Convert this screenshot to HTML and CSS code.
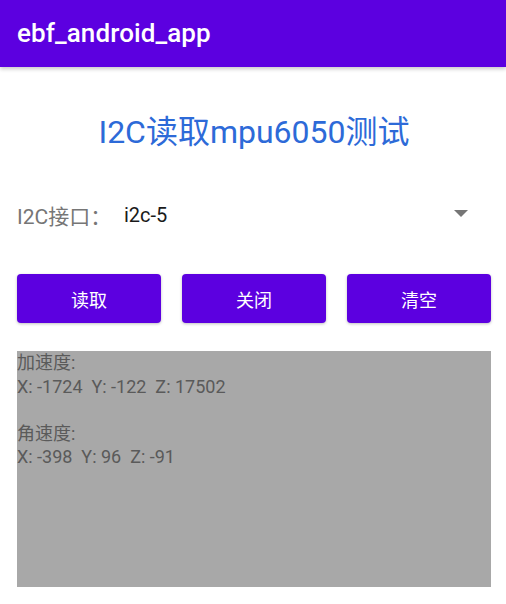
FILE: index.html
```html
<!DOCTYPE html>
<html lang="zh">
<head>
<meta charset="utf-8">
<title>ebf_android_app</title>
<link rel="stylesheet" href="styles.css">
</head>
<body>
<header class="appbar"><span class="appbar-title">ebf_android_app</span></header>
<main class="content">
  <h1 class="heading">I2C读取mpu6050测试</h1>
  <div class="row">
    <span class="label">I2C接口：</span>
    <div class="spinner">
      <span class="spinner-value">i2c-5</span>
      <span class="arrow"></span>
    </div>
  </div>
  <div class="buttons">
    <button class="btn">读取</button>
    <button class="btn">关闭</button>
    <button class="btn">清空</button>
  </div>
  <div class="output">加速度:
X: -1724  Y: -122  Z: 17502

角速度:
X: -398  Y: 96  Z: -91</div>
</main>
</body>
</html>
```
FILE: styles.css
```css
html, body {
  margin: 0;
  padding: 0;
  background: #ffffff;
  font-family: Roboto, "Noto Sans CJK SC", sans-serif;
}
.appbar {
  height: 67px;
  background: #5c00e0;
  display: flex;
  align-items: center;
  padding-left: 17px;
  box-shadow: 0 2px 4px rgba(0, 0, 0, 0.22);
  position: relative;
  z-index: 1;
}
.appbar-title {
  color: #ffffff;
  font-weight: 500;
  font-size: 26px;
  line-height: 30px;
  margin-top: -1px;
  letter-spacing: 0.1px;
}
.content {
  margin-left: 17px;
  width: 474px;
  display: flex;
  flex-direction: column;
}
.heading {
  margin: 45px 0 0;
  text-align: center;
  font-weight: 400;
  font-size: 32px;
  line-height: 40px;
  color: #2d6ad8;
}
.row {
  margin-top: 43px;
  height: 40px;
  display: flex;
  align-items: center;
}
.label {
  font-size: 21px;
  color: #767676;
  width: 107px;
}
.spinner {
  flex: 1;
  display: flex;
  align-items: center;
  justify-content: space-between;
  padding-right: 23px;
}
.spinner-value {
  font-size: 20px;
  color: #1a1a1a;
}
.arrow {
  width: 0;
  height: 0;
  border-left: 7px solid transparent;
  border-right: 7px solid transparent;
  border-top: 7px solid #767676;
  margin-top: -3px;
}
.buttons {
  margin-top: 39px;
  display: grid;
  grid-template-columns: repeat(3, 1fr);
  column-gap: 21px;
}
.btn {
  height: 49px;
  border: none;
  border-radius: 4px;
  background: #5c00e0;
  color: #ffffff;
  font-family: Roboto, "Noto Sans CJK SC", sans-serif;
  font-size: 18px;
  box-shadow: 0 1px 3px rgba(0, 0, 0, 0.25);
  padding: 0;
}
.output {
  margin-top: 28px;
  height: 236px;
  background: #a8a8a8;
  color: #5a5a5a;
  font-size: 18px;
  line-height: 23.5px;
  white-space: pre;
}
```
